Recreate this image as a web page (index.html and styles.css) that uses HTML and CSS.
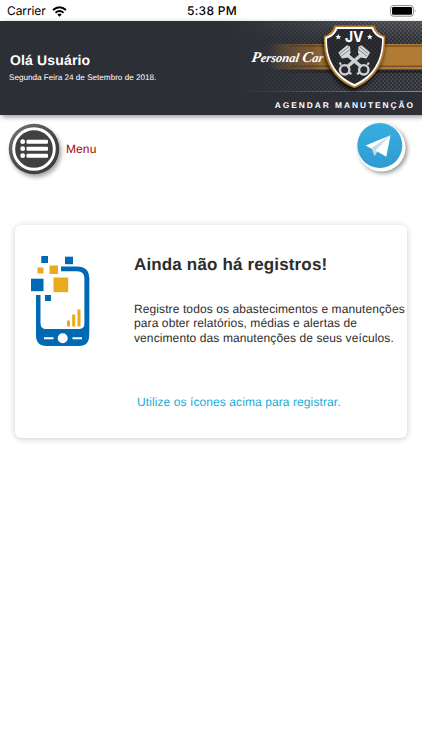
FILE: index.html
```html
<!DOCTYPE html>
<html lang="pt-BR">
<head>
<meta charset="UTF-8">
<meta name="viewport" content="width=device-width, initial-scale=1.0">
<title>Personal Car</title>
<link rel="stylesheet" href="styles.css">
</head>
<body>

<div class="status-bar">
  <div class="carrier">
    <span>Carrier</span>
    <svg class="wifi" viewBox="0 0 15 11">
      <path d="M1 4.1 Q7.5 -1.7 14 4.1" fill="none" stroke="#000" stroke-width="2"/>
      <path d="M3.5 6.7 Q7.5 3.3 11.5 6.7" fill="none" stroke="#000" stroke-width="1.8"/>
      <path d="M5.3 8.5 Q7.5 6.7 9.7 8.5 L7.5 10.8Z"/>
    </svg>
  </div>
  <div class="time">5:38 PM</div>
  <svg class="battery" viewBox="0 0 27 12">
    <rect x=".6" y=".6" width="22.8" height="10.6" rx="2.6" fill="#fff" stroke="#888" stroke-width="1"/>
    <rect x="2" y="2" width="20" height="7.8" rx="1.3"/>
    <path d="M24.8 4 Q26.4 5.9 24.8 7.8Z" fill="#888"/>
  </svg>
</div>

<header class="header">
  <div class="user">
    <h1 class="hello">Olá Usuário</h1>
    <p class="date">Segunda Feira 24 de Setembro de 2018.</p>
  </div>
  <div class="brand">
    <svg class="banner" viewBox="230 21 192 72">
      <defs>
        <pattern id="mesh" width="4" height="4" patternUnits="userSpaceOnUse">
          <rect width="4" height="4" fill="#4c4f55"/>
          <ellipse cx="1" cy="1" rx="1.5" ry="1" fill="#292b30"/>
          <ellipse cx="3" cy="3" rx="1.5" ry="1" fill="#292b30"/>
        </pattern>
        <linearGradient id="fade">
          <stop offset="0" stop-color="#2d2f37"/>
          <stop offset=".62" stop-color="#2d2f37" stop-opacity=".4"/>
          <stop offset="1" stop-color="#2d2f37" stop-opacity=".1"/>
        </linearGradient>
        <linearGradient id="gold" gradientUnits="userSpaceOnUse" x1="268" x2="330" y1="0" y2="0">
          <stop offset="0" stop-color="#b17b35" stop-opacity="0"/>
          <stop offset=".7" stop-color="#8a612f" stop-opacity=".8"/>
          <stop offset="1" stop-color="#b17b35"/>
        </linearGradient>
        <linearGradient id="shine" x1="0" y1="0" x2="0" y2="1">
          <stop offset="0" stop-color="#fff" stop-opacity=".15"/>
          <stop offset=".25" stop-color="#fff" stop-opacity="0"/>
        </linearGradient>
        <linearGradient id="edge">
          <stop offset="0" stop-color="#777" stop-opacity="0"/>
          <stop offset="1" stop-color="#888"/>
        </linearGradient>
        <linearGradient id="shade">
          <stop offset="0" stop-opacity="0"/>
          <stop offset=".5" stop-opacity=".35"/>
        </linearGradient>
        <filter id="drop" x="-20%" y="-20%" width="140%" height="150%">
          <feDropShadow dx="-1" dy="3" stdDeviation="2" flood-opacity=".8"/>
        </filter>
      </defs>
      <rect x="230" y="21" width="192" height="71" fill="url(#mesh)"/>
      <rect x="230" y="21" width="192" height="71" fill="url(#shine)"/>
      <rect x="230" y="21" width="192" height="71" fill="url(#fade)"/>
      <rect x="240" y="91" width="182" height="1" fill="url(#edge)"/>
      <rect x="268" y="69" width="154" height="4" fill="url(#shade)"/>
      <rect x="268" y="44" width="154" height="25.5" fill="url(#gold)"/>
      <rect x="290" y="45.5" width="132" height="1" fill="#493017" opacity=".8"/>
      <rect x="290" y="65.7" width="132" height="1" fill="#493017" opacity=".8"/>
      <text class="script" transform="translate(251 61.5) skewX(-9)" textLength="72" lengthAdjust="spacingAndGlyphs"><tspan class="cap">P</tspan>ersonal <tspan class="cap">C</tspan>ar</text>
      <g filter="url(#drop)">
        <path d="M334.5 25.5 H374.5 Q377 34 385 36 C386 60 377 79 354.5 88 C332 79 323 60 324 36 Q332 34 334.5 25.5Z" fill="#b17b35"/>
        <path d="M336 27 H373 Q375.5 35 383.7 37 C384.2 59 376 77.2 354.5 86.4 C333 77.2 324.8 59 325.3 37 Q333.5 35 336 27Z" fill="#fff"/>
      </g>
      <path d="M337.5 29 H371.5 Q374.5 36.5 382 38.8 C382.3 58 374.5 75.5 354.5 84 C334.5 75.5 326.7 58 327 38.8 Q334.5 36.5 337.5 29Z" fill="#202226"/>
      <path d="M337.5 29 H371.5 Q374.5 36.5 382 38.8 C382.3 58 374.5 75.5 354.5 84 C334.5 75.5 326.7 58 327 38.8 Q334.5 36.5 337.5 29Z" fill="url(#mesh)" opacity=".3"/>
      <text class="monogram" x="345" y="42" textLength="18.5" lengthAdjust="spacingAndGlyphs">JV</text>
      <path id="star" d="M338.3 34 l.8 1.9 2.1.1 -1.6 1.300 .6 2.100 -1.900 -1.200 -1.900 1.200 .6 -2.100 -1.600 -1.300 2.100 -.1Z" fill="#fff"/>
      <use href="#star" x="31.5"/>
      <g id="piston">
        <path d="M345 53 L361.5 67" stroke="#cfd0d1" stroke-width="3.4"/>
        <path d="M338.3 52.5 L347 45.2 L350 46.500 L350.500 53 L347.500 57.500 L342 58.500Z" fill="#d6d7d8"/>
        <path d="M340 53.8 L349 46.800 M341.500 56 L350.200 49.500" stroke="#6f7174" stroke-width=".8"/>
        <circle cx="363.800" cy="69.800" r="4.700" fill="none" stroke="#cfd0d1" stroke-width="2.400"/>
        <path d="M357 74 l3 -1.500 M367.500 65 l1.300 -2.500" stroke="#cfd0d1" stroke-width="2"/>
      </g>
      <use href="#piston" transform="translate(708.5 0) scale(-1 1)"/>
    </svg>
    <a class="schedule">AGENDAR MANUTENÇÃO</a>
  </div>
</header>

<nav class="toolbar">
  <a class="menu">
    <svg class="menu-icon" viewBox="0 0 52 52">
      <defs>
        <linearGradient id="ring" x1="0" y1="0" x2="1" y2="1">
          <stop offset="0" stop-color="#777"/>
          <stop offset=".6" stop-color="#444"/>
          <stop offset="1" stop-color="#393939"/>
        </linearGradient>
      </defs>
      <circle cx="26" cy="26" r="25.3" fill="url(#ring)"/>
      <circle cx="26" cy="26" r="20.3" fill="#404241" stroke="#fff" stroke-width="2.9"/>
      <g fill="#fff">
        <circle cx="14.7" cy="18.7" r="2.4"/>
        <circle cx="14.7" cy="25.7" r="2.4"/>
        <circle cx="14.7" cy="32.7" r="2.4"/>
        <rect x="18.5" y="16.7" width="21.5" height="4" rx="1"/>
        <rect x="18.5" y="23.7" width="21.5" height="4" rx="1"/>
        <rect x="18.5" y="30.7" width="21.5" height="4" rx="1"/>
      </g>
    </svg>
    <span>Menu</span>
  </a>
  <svg class="telegram" viewBox="0 0 50 50">
    <defs>
      <linearGradient id="sky" x1="0" y1="0" x2="0" y2="1">
        <stop offset="0" stop-color="#39addf"/>
        <stop offset="1" stop-color="#2f9bd3"/>
      </linearGradient>
    </defs>
    <circle cx="24.5" cy="24.5" r="24" fill="#fff"/>
    <circle cx="22.8" cy="22.5" r="22.5" fill="url(#sky)"/>
    <path d="M8.5 22.5 L33.5 12.2 L16 26.5Z" fill="#fff"/>
    <path d="M14.5 25 L33.5 12.2 L20.5 28.5 L17.5 33.2Z" fill="#c8daea"/>
    <path d="M18.5 27.5 L33.5 12.2 L29.3 33.8Z" fill="#fff"/>
  </svg>
</nav>

<main class="card">
  <svg class="phone" viewBox="0 0 60 92">
    <path d="M30 13.8 H46 Q55.8 13.8 55.8 23 V76" fill="none" stroke="#0069b3" stroke-width="4.8"/>
    <path d="M5 40 H9.5 V68 Q9.5 74 15 74 H48 Q54 74 54 67 V22 H58.2 V80 Q58.2 91 48 91 H15.5 Q5 91 5 80Z" fill="#0069b3"/>
    <circle cx="31.7" cy="83.3" r="5" fill="#fff"/>
    <path d="M13 83.3 H22.5 M41.5 83.3 H51" stroke="#fff" stroke-width="2"/>
    <g fill="#0069b3">
      <rect x="10.3" y="1" width="6.7" height="7"/>
      <rect x="34" y="1.7" width="8" height="7.5"/>
      <rect x="0" y="23.7" width="12.5" height="12.5"/>
      <rect x="14" y="40" width="6" height="6"/>
    </g>
    <g fill="#eba91e">
      <rect x="6.5" y="12.5" width="6" height="6"/>
      <rect x="18.5" y="10.5" width="8.5" height="8.5"/>
      <rect x="22.5" y="22.5" width="14.7" height="14.7"/>
      <rect x="36" y="65.5" width="3" height="6"/>
      <rect x="41.2" y="59.5" width="3" height="12"/>
      <rect x="46.5" y="54.5" width="3" height="17"/>
    </g>
  </svg>
  <div class="content">
    <h2 class="title">Ainda não há registros!</h2>
    <p class="text">Registre todos os abastecimentos e manutenções<br>para obter relatórios, médias e alertas de<br>vencimento das manutenções de seus veículos.</p>
    <p class="hint">Utilize os ícones acima para registrar.</p>
  </div>
</main>

</body>
</html>
```
FILE: styles.css
```css
* {
  box-sizing: border-box;
}

body {
  margin: 0;
  min-height: 100vh;
  background: #fff;
  color: #2d2d2d;
  font-family: "Liberation Sans", Arial, sans-serif;
  text-rendering: geometricPrecision;
}

h1, h2, p {
  margin: 0;
}

svg {
  display: block;
  flex: none;
}

.status-bar {
  display: grid;
  grid-template-columns: 1fr auto 1fr;
  align-items: center;
  height: 21px;
  padding: 1px 5px 0 7px;
  color: #000;
  font: 12px/20px Inter, sans-serif;
}

.carrier {
  display: flex;
  align-items: center;
  gap: 6px;
  letter-spacing: -0.1px;
}

.wifi {
  width: 15px;
  height: 11px;
}

.time {
  font-weight: 500;
  letter-spacing: 0.3px;
}

.battery {
  justify-self: end;
  width: 27px;
  height: 12px;
}

.header {
  display: flex;
  justify-content: space-between;
  height: 94px;
  background: #2d2f37;
  color: #fff;
  box-shadow: 2px 2px 5px rgba(0, 0, 0, 0.4);
}

.user {
  padding: 31px 0 0 9px;
}

.hello {
  padding-left: 1px;
  font-size: 14px;
  line-height: 17px;
  letter-spacing: 0.15px;
  white-space: nowrap;
}

.date {
  margin-top: 3px;
  font-size: 8.15px;
  line-height: 12px;
  white-space: nowrap;
}

.brand {
  width: 192px;
}

.banner {
  width: 192px;
  height: 72px;
}

.script {
  fill: #fff;
  font: italic bold 12.5px "Liberation Serif", cursive;
}

.cap {
  font-size: 15px;
}

.monogram {
  fill: #fff;
  font: bold 15px Inter, sans-serif;
}

.schedule {
  display: block;
  padding-right: 7px;
  font-size: 8.4px;
  font-weight: bold;
  line-height: 25px;
  letter-spacing: 1.95px;
  text-align: right;
  white-space: nowrap;
}

.toolbar {
  display: flex;
  justify-content: space-between;
  height: 110px;
  padding: 8px 15px 0 8px;
}

.menu {
  display: flex;
  align-items: center;
  gap: 6px;
  height: 52px;
  color: #9d0b0e;
  font-size: 12px;
  letter-spacing: 0.1px;
}

.menu-icon {
  width: 52px;
  height: 52px;
  filter: drop-shadow(2px 3px 2px rgba(0, 0, 0, 0.35));
}

.telegram {
  width: 50px;
  height: 50px;
  filter: drop-shadow(2px 2px 2px rgba(0, 0, 0, 0.4));
}

.card {
  display: flex;
  width: 392px;
  height: 213px;
  margin-left: 15px;
  padding: 30px 0 0 16px;
  border-radius: 6px;
  background: #fff;
  box-shadow: 0 1px 6px rgba(0, 0, 0, 0.2);
}

.phone {
  width: 60px;
  height: 92px;
}

.content {
  margin-left: 43px;
  white-space: nowrap;
}

.title {
  font-size: 17px;
  line-height: 20px;
  letter-spacing: 0.15px;
}

.text {
  margin-top: 27px;
  font-size: 12px;
  line-height: 14.3px;
  letter-spacing: 0.1px;
}

.hint {
  margin: 49px 0 0 3px;
  color: #16add8;
  font-size: 12px;
  line-height: 16px;
  letter-spacing: 0.09px;
}
```
